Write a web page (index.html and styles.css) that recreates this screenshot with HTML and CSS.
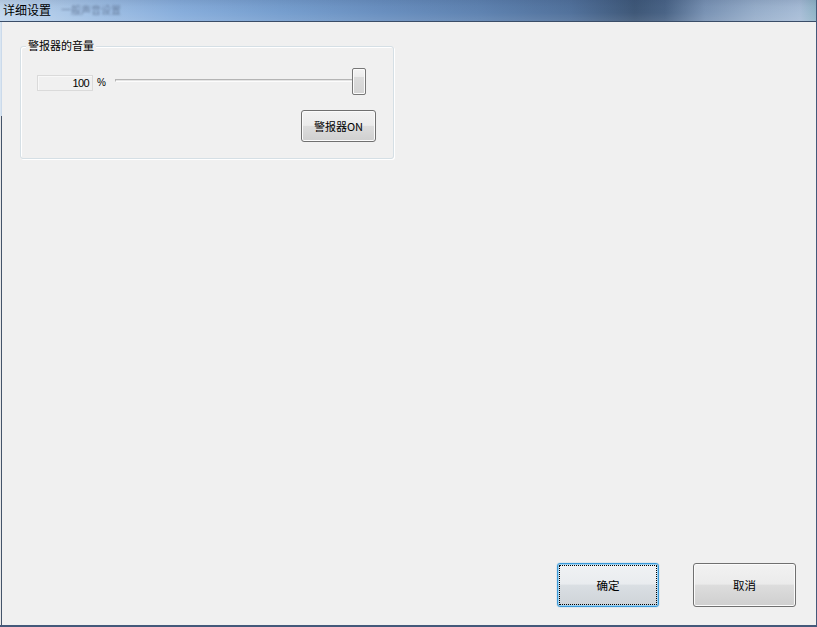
FILE: index.html
```html
<!DOCTYPE html>
<html lang="zh">
<head>
<meta charset="utf-8">
<title>详细设置</title>
<link rel="stylesheet" href="styles.css">
</head>
<body>
<div class="window">
  <div class="titlebar">
    <span class="title">详细设置</span>
    <span class="ghost">一般声音设置</span>
  </div>
  <div class="client">
    <div class="group">
      <span class="legend">警报器的音量</span>
      <div class="vol-row">
        <div class="numbox">100</div>
        <span class="pct">%</span>
        <div class="slider">
          <div class="track"></div>
          <div class="thumb"></div>
        </div>
      </div>
      <div class="btn-row">
        <button class="btn btn-alarm">警报器ON</button>
      </div>
    </div>
    <div class="spacer"></div>
    <div class="footer">
      <button class="btn btn-dlg btn-default">确定</button>
      <button class="btn btn-dlg">取消</button>
    </div>
  </div>
</div>
</body>
</html>
```

FILE: styles.css
```css
* { box-sizing: border-box; }
html, body { margin: 0; padding: 0; }
body {
  width: 817px;
  height: 627px;
  overflow: hidden;
  background: #f0f0f0;
  font-family: "Noto Sans CJK SC", "Noto Sans", sans-serif;
  font-size: 11px;
  color: #000;
}
.window {
  width: 817px;
  height: 627px;
  display: flex;
  flex-direction: column;
  border-right: 1px solid #44597a;
  border-bottom: 2px solid #44597a;
}
.titlebar {
  height: 22px;
  flex: none;
  display: flex;
  align-items: center;
  padding-left: 3px;
  border-bottom: 1px solid #3a4d68;
  background:
    linear-gradient(to bottom, rgba(30,50,90,0.12) 0, rgba(30,50,90,0.04) 30%, rgba(255,255,255,0) 60%, rgba(255,255,255,0.08) 100%),
    linear-gradient(to right, #c3d8ee 0px, #a2c1e5 90px, #88aedc 180px, #779fcf 280px, #6a90c0 380px, #5f83b1 480px, #52729c 570px, #3f5878 635px, #4a6486 665px, #7a93b4 705px, #98afcb 755px, #a8bdd7 800px, #8fb4c6 817px);
}
.title {
  font-size: 12px;
  line-height: 14px;
  color: #000;
  margin-top: -2px;
}
.ghost {
  font-size: 10px;
  margin-left: 10px;
  color: #5d7190;
  filter: blur(1.2px);
  opacity: 0.8;
  margin-top: -2px;
}
.client {
  flex: 1;
  display: flex;
  flex-direction: column;
  padding-left: 2px;
  background:
    linear-gradient(#cbdaeb 0 94px, #44546a 94px) 1px 0 / 1px 100% no-repeat,
    linear-gradient(#d9e5f1 0 94px, #e8e8e8 94px) 0 0 / 1px 100% no-repeat,
    #f0f0f0;
}
.group {
  position: relative;
  margin-top: 24px;
  margin-left: 18px;
  width: 374px;
  height: 113px;
  border: 1px solid #d5dfe5;
  border-radius: 3px;
  box-shadow: inset 1px 1px 0 #fff, 1px 1px 0 #fff;
  display: flex;
  flex-direction: column;
}
.legend {
  position: absolute;
  top: -9px;
  left: 5px;
  padding: 0 2px;
  background: #f0f0f0;
  font-size: 11px;
  line-height: 15px;
}
.vol-row {
  display: flex;
  align-items: center;
  margin-top: 21px;
  padding-left: 16px;
  height: 27px;
}
.numbox {
  width: 56px;
  height: 16px;
  margin-top: 2px;
  border: 1px solid #dadada;
  box-shadow: inset 1px 1px 0 #f8f8f8;
  background: #f0f0f0;
  text-align: right;
  padding-right: 3px;
  font-family: "Liberation Sans", sans-serif;
  font-size: 11px;
  line-height: 14px;
  letter-spacing: -0.6px;
}
.pct {
  margin-left: 4px;
  margin-top: 2px;
  font-family: "Liberation Sans", sans-serif;
  font-size: 10px;
  width: 8px;
}
.slider {
  margin-left: 10px;
  width: 251px;
  height: 27px;
  display: flex;
  align-items: center;
}
.track {
  flex: 1;
  height: 3px;
  margin-top: -2px;
  border-top: 1px solid #b4b4b4;
  border-left: 1px solid #b4b4b4;
  border-bottom: 1px solid #fcfcfc;
  background: #e4e4e4;
}
.thumb {
  width: 14px;
  height: 27px;
  border: 1px solid #777;
  border-radius: 2px;
  box-shadow: inset 0 0 0 1px #fbfbfb;
  background: linear-gradient(#f4f4f4 0%, #ececec 30%, #dcdcdc 31%, #d4d4d4 100%);
}
.btn-row {
  display: flex;
  justify-content: flex-end;
  padding-right: 17px;
  margin-top: 15px;
}
.btn {
  font-family: "Noto Sans CJK SC", "Noto Sans", sans-serif;
  font-size: 11px;
  color: #000;
  padding: 0;
  border: 1px solid #707070;
  border-radius: 3px;
  box-shadow: inset 0 0 0 1px #fbfbfb;
  background: linear-gradient(#f2f2f2 0%, #ebebeb 48%, #dddddd 50%, #cfcfcf 100%);
}
.btn-alarm {
  width: 75px;
  height: 32px;
}
.spacer { flex: 1; }
.footer {
  display: flex;
  justify-content: flex-end;
  gap: 34px;
  padding-right: 20px;
  padding-bottom: 18px;
}
.btn-dlg {
  width: 103px;
  height: 44px;
  font-size: 11.5px;
}
.btn-default {
  width: 102px;
  border: 1px solid #3c9ad8;
  box-shadow: inset 0 0 0 1px #9fd3f3, 0 0 1px #3c9ad8;
  outline: 1px dotted #000;
  outline-offset: -3px;
  background: linear-gradient(#f0f2f4 0%, #e9ecef 48%, #dadfe3 50%, #ced3d8 100%);
}
```
